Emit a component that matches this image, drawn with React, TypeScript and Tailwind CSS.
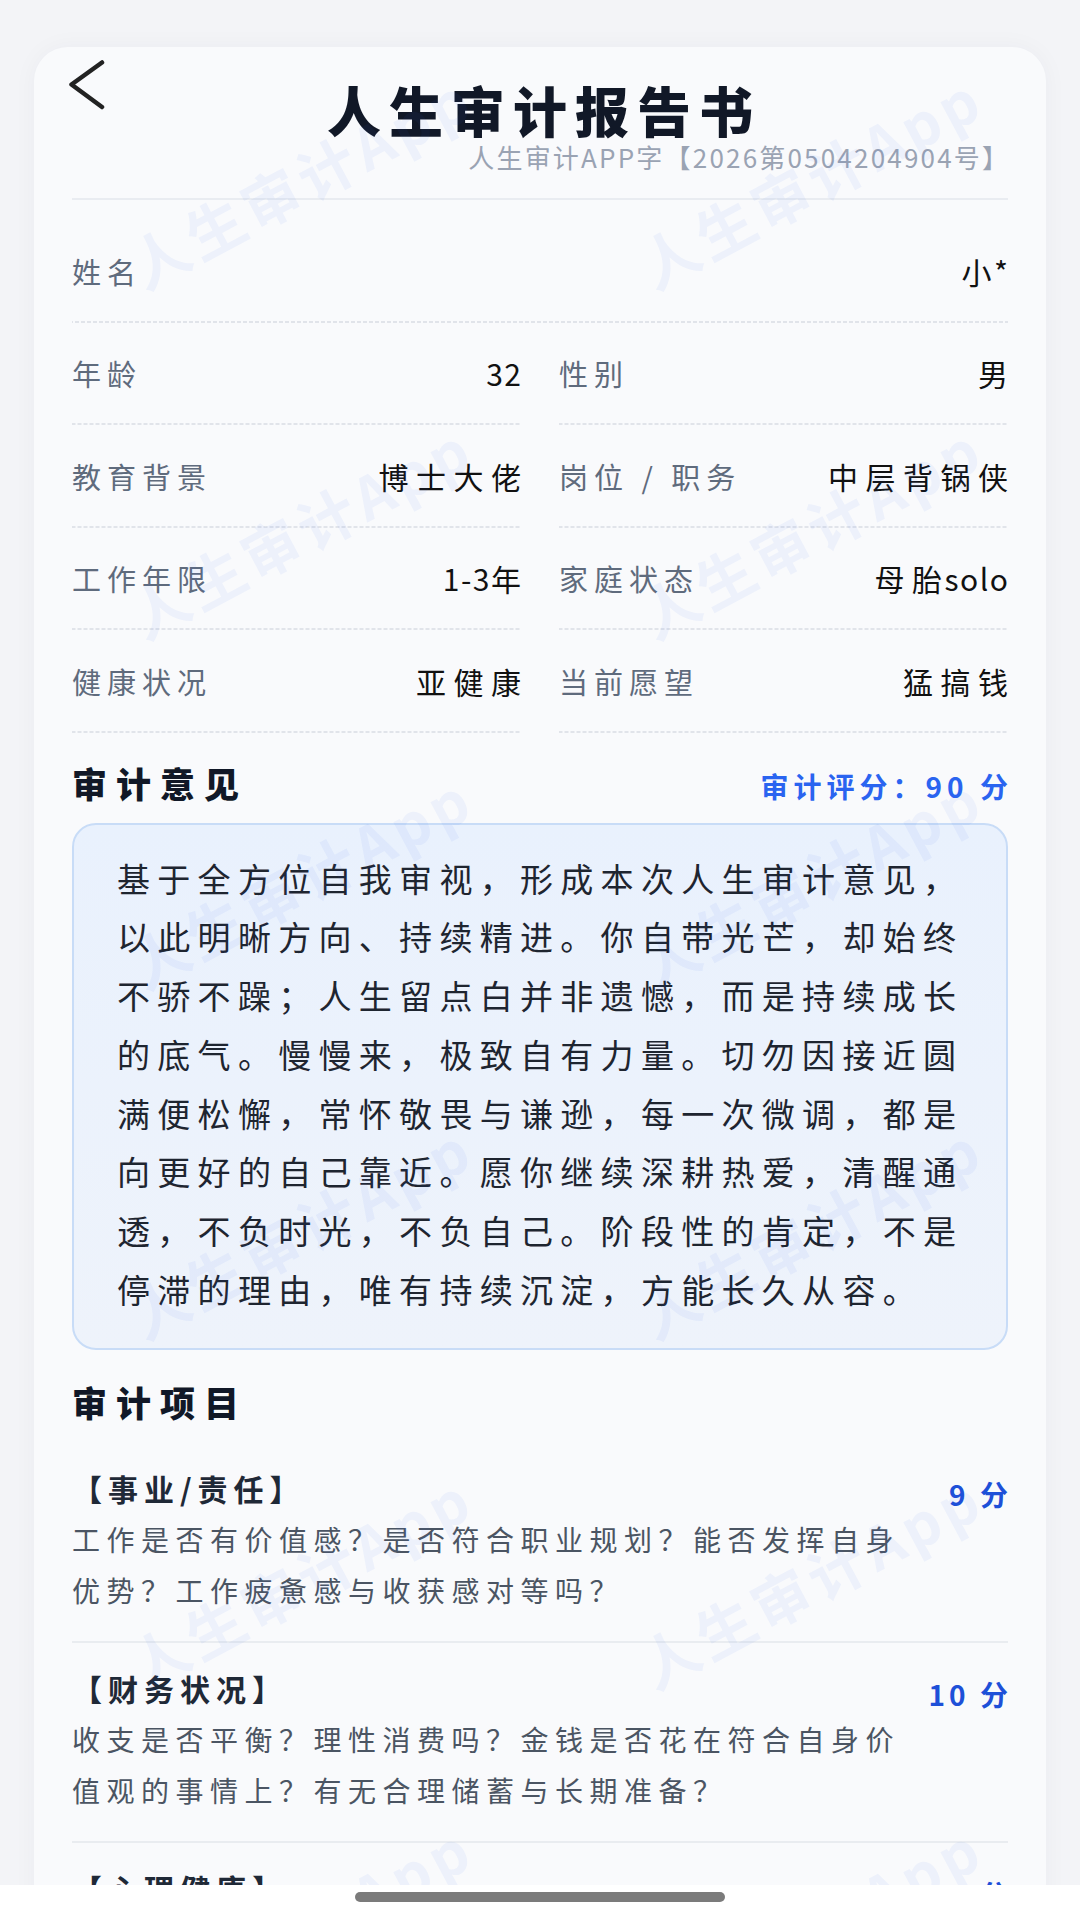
import React from "react";

const dashed =
  "bg-[linear-gradient(to_right,#e1e4ea_0_4px,transparent_4px_6px)] bg-[length:6px_2px] bg-repeat-x bg-bottom";

const pairRows: [string, string][][] = [
  [
    ["年龄", "32"],
    ["性别", "男"],
  ],
  [
    ["教育背景", "博士大佬"],
    ["岗位 / 职务", "中层背锅侠"],
  ],
  [
    ["工作年限", "1-3年"],
    ["家庭状态", "母胎solo"],
  ],
  [
    ["健康状况", "亚健康"],
    ["当前愿望", "猛搞钱"],
  ],
];

const opinion = [
  "基于全方位自我审视，形成本次人生审计意见，",
  "以此明晰方向、持续精进。你自带光芒，却始终",
  "不骄不躁；人生留点白并非遗憾，而是持续成长",
  "的底气。慢慢来，极致自有力量。切勿因接近圆",
  "满便松懈，常怀敬畏与谦逊，每一次微调，都是",
  "向更好的自己靠近。愿你继续深耕热爱，清醒通",
  "透，不负时光，不负自己。阶段性的肯定，不是",
  "停滞的理由，唯有持续沉淀，方能长久从容。",
];

const items = [
  {
    title: "【事业/责任】",
    score: "9 分",
    lines: ["工作是否有价值感？是否符合职业规划？能否发挥自身", "优势？工作疲惫感与收获感对等吗？"],
  },
  {
    title: "【财务状况】",
    score: "10 分",
    lines: ["收支是否平衡？理性消费吗？金钱是否花在符合自身价", "值观的事情上？有无合理储蓄与长期准备？"],
  },
  {
    title: "【心理健康】",
    score: "9 分",
    lines: ["情绪是否稳定？能否接纳真实的自己？压力是否有", "合理的释放渠道？"],
  },
];

const latinRe = /^[A-Za-z0-9*\-]+$/;

function Label({ children }: { children: React.ReactNode }) {
  return <span className="text-[29px] tracking-[6px] text-[#5f6b7d] whitespace-nowrap">{children}</span>;
}

function Value({ text }: { text: string }) {
  const runs = text.split(/([A-Za-z0-9*\-]+)/).filter((r) => r.length > 0);
  const latinEnd = /[A-Za-z0-9*\-]$/.test(text);
  return (
    <span
      className={`text-[30px] text-[#111111] whitespace-nowrap ${latinEnd ? "-mr-[1.5px]" : "-mr-[7.5px]"}`}
    >
      {runs.map((r, i) => {
        const isLatin = latinRe.test(r);
        const last = i === runs.length - 1;
        if (isLatin) {
          return (
            <span key={i} className="tracking-[1.5px]">
              {r}
            </span>
          );
        }
        return (
          <span key={i} className={last ? "tracking-[7.5px]" : "tracking-[7.5px] -mr-[5px]"}>
            {r}
          </span>
        );
      })}
    </span>
  );
}

export default function App() {
  const marks = Array.from({ length: 12 });
  return (
    <div className="w-[1080px] h-[1920px] flex flex-col bg-[#f3f4f7] overflow-hidden font-['Noto_Sans_CJK_SC','Noto_Sans',sans-serif]">
      <div className="relative flex-1 overflow-hidden pt-[47px] px-[34px]">
        <div className="min-h-full bg-[#f9fafc] rounded-t-[34px] shadow-[0_0_24px_rgba(30,40,80,0.04)] px-[38px] pt-[13px]">
          {/* Header */}
          <div className="grid grid-cols-[1fr_auto_1fr] items-start">
            <div>
              <svg width="40" height="50" viewBox="0 0 40 50" className="-ml-[4px]">
                <path
                  d="M34 2.5 L3.5 24.5 L34 47"
                  fill="none"
                  stroke="#222222"
                  strokeWidth="4.5"
                  strokeLinecap="round"
                  strokeLinejoin="round"
                />
              </svg>
            </div>
            <h1 className="mt-[20px] text-[54px] leading-[60px] font-black tracking-[8px] pl-[8px] text-[#111827] whitespace-nowrap">
              人生审计报告书
            </h1>
            <div />
          </div>
          <div className="mt-[2px] text-right text-[26px] leading-[30px] tracking-[2.2px] -mr-[2.2px] text-[#9aa3b3] whitespace-nowrap">
            人生审计APP字【2026第0504204904号】
          </div>
          <div className="mt-[26px] h-[2px] bg-[#e9ecf1]" />

          {/* Info */}
          <div className="pt-[20px]">
            <div className={`h-[102.5px] flex items-center justify-between ${dashed}`}>
              <Label>姓名</Label>
              <Value text="小*" />
            </div>
            {pairRows.map((row, i) => (
              <div key={i} className="grid grid-cols-2 gap-x-[38px]">
                {row.map(([l, v]) => (
                  <div key={l} className={`h-[102.5px] flex items-center justify-between ${dashed}`}>
                    <Label>{l}</Label>
                    <Value text={v} />
                  </div>
                ))}
              </div>
            ))}
          </div>

          {/* Opinion */}
          <div className="mt-[28px] h-[44px] flex items-center justify-between">
            <h2 className="text-[35px] leading-[44px] font-black tracking-[9px] text-[#111827] whitespace-nowrap">
              审计意见
            </h2>
            <span className="pt-[6px] text-[28px] leading-[36px] font-bold tracking-[5px] -mr-[5px] text-[#2a64f0] whitespace-nowrap">
              审计评分：90 分
            </span>
          </div>
          <div className="mt-[18px] rounded-[24px] border-2 border-[#c8dcf7] bg-[linear-gradient(180deg,#e9f1fd,#eef3fb)] px-[43px] pt-[24px] pb-[29px]">
            {opinion.map((line) => (
              <div
                key={line}
                className="text-[33px] leading-[58.8px] tracking-[7.3px] text-[#1e2530] whitespace-nowrap"
              >
                {line}
              </div>
            ))}
          </div>

          {/* Items */}
          <h2 className="mt-[30px] text-[35px] leading-[44px] font-black tracking-[9px] text-[#111827] whitespace-nowrap">
            审计项目
          </h2>
          <div className="mt-[19px]">
            {items.map((it) => (
              <div key={it.title} className="flex justify-between pt-[27px] pb-[25px] border-b-2 border-[#e9ecf0]">
                <div>
                  <div className="text-[30px] leading-[36px] font-bold tracking-[6px] text-[#1f2937] whitespace-nowrap">
                    {it.title}
                  </div>
                  <div className="mt-[8px]">
                    {it.lines.map((l) => (
                      <div
                        key={l}
                        className="text-[28px] leading-[51px] tracking-[6.5px] text-[#4b5563] whitespace-nowrap"
                      >
                        {l}
                      </div>
                    ))}
                  </div>
                </div>
                <div className="mt-[6px] text-[28px] leading-[36px] font-bold tracking-[4px] -mr-[4px] text-[#1e50d8] whitespace-nowrap">
                  {it.score}
                </div>
              </div>
            ))}
          </div>
        </div>

        {/* Watermark overlay */}
        <div className="pointer-events-none absolute inset-0 overflow-hidden">
          <div className="grid grid-cols-[510px_510px] auto-rows-[350px] pl-[45px] pt-[5px]">
            {marks.map((_, i) => (
              <div key={i} className="flex items-center justify-center">
                <span className="rotate-[-28deg] whitespace-nowrap text-[58px] font-bold tracking-[5px] text-[rgba(59,105,235,0.06)]">
                  人生审计App
                </span>
              </div>
            ))}
          </div>
        </div>
      </div>

      {/* Bottom home indicator */}
      <div className="h-[35px] bg-white flex justify-center pt-[7px]">
        <div className="w-[370px] h-[10px] rounded-full bg-[#7b7b7b]" />
      </div>
    </div>
  );
}
